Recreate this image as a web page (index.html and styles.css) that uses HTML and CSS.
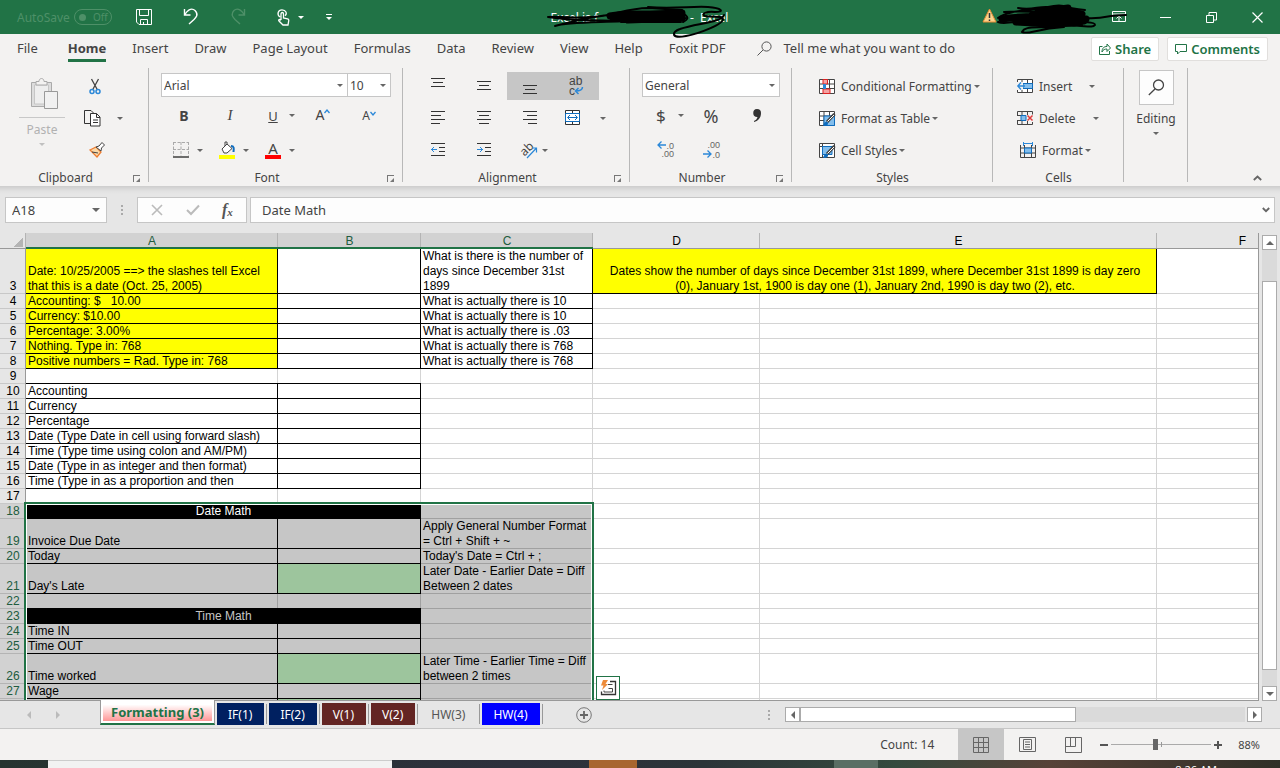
FILE: index.html
```html
<!DOCTYPE html>
<html lang="en">
<head>
    <meta charset="UTF-8">
    <meta name="viewport" content="width=device-width, initial-scale=1">
    <title>Excel</title>
    <link rel="stylesheet" href="styles.css">
</head>
<body>
    <header class="title-bar">
        <div class="quick-access">
            <span class="autosave">AutoSave</span>
            <button class="toggle" aria-label="AutoSave"><i></i>Off</button>
            <button class="qa save" aria-label="Save"><svg width="16" height="16"><path d="M.5.5h15v15H3L.5 13zM3.500 .5v6h9v-6M4.500 15.500v-5h7v5M7.500 13v2" fill="none" stroke="#fff"/></svg></button>
            <button class="qa undo" aria-label="Undo"><svg width="16" height="18"><path d="M1.500 1v6h6M1.500 7C4 3 8-1 12 2.500c4 4 1 7-1 9L6 16" fill="none" stroke="#fff" stroke-width="1.400"/></svg></button>
            <button class="qa redo" aria-label="Redo"><svg width="16" height="18"><path d="M14.500 1v6h-6M14.500 7C12 3 8-1 4 2.500c-4 4-1 7 1 9l5 4.500" fill="none" stroke="#4e9068" stroke-width="1.400"/></svg></button>
            <button class="qa touch" aria-label="Touch mode"><svg width="13" height="17"><path d="M3 8C-.5 5.500 1 .8 5 .8s5.500 4 3 6M4 11V5c0-2 2.500-2 2.500 0v4l4 .8c1 .2 1.500 1 1.200 2L11 16H6L2 12c-1-1.500.5-2 2-.8" fill="none" stroke="#fff" stroke-width="1.300"/></svg><span class="caret"></span></button>
            <button class="qa more" aria-label="Customize"><span class="caret"></span></button>
        </div>
        <div class="doc-name">
            <span>Excel is f</span><span class="app">- &nbsp;Excel</span>
            <svg class="scribble" width="184" height="36"><path d="M2 17c20-1 35 3 60-2 14-3 25-7 40-7l34 2M2 17c30 5 60 3 90 4 20 1 40 2 48-3M9 26c20-5 35-10 66-12M9 26c15-5 60-3 80-6" class="thin"/><path d="M64 16c14-3 25-2 40-2l32-1M66 17c30-3 50-2 70 0M74 18l62-3M82 20l54-2M84 14h52" class="fat"/><path d="M102 7c25 2 45-1 60 0 14 1 17 5 7 5-8-1-15 2-10 4 8 2 17-1 18 3 1 5-25 15-37 17-15 3-15-4-6-7 16-6 41-6 44-14M138 14c6 4 3 6-1 8M75 22h60" class="thin"/></svg>
        </div>
        <div class="window-tools">
            <svg class="warn" width="15" height="15"><path d="M7.500 1l6.500 13H1z" fill="#fbd38b" stroke="#e58a35"/><path d="M7.500 5v5M7.500 11.500v1.500" stroke="#333" stroke-width="1.500"/></svg>
            <svg class="scribble-user" width="134" height="36"><path d="M2 18c10-8 30-7 45-10 20-4 25 1 42 2M2 22c8 3 14-2 24 1s42 3 60 2M8 12c22-2 40 2 60-2M22 8c14 3 20-2 30-1 20-5 24 4 36 6M26 32c3-7 15-3 40-6 20-2 30 3 33-1 0-5-20 0-13-7 14 2 26-3 44-3M26 32c6 3 13-3 42-5" class="thin"/><path d="M6 19c24-4 50-3 84 0M36 15c20-7 40-4 50-1M42 12l30-4M20 22c24 2 50 2 68-1M40 23h38" class="fat"/></svg>
            <button class="win" aria-label="Ribbon display"><svg width="14" height="12"><path d="M.5.5h13v10H.5zM.5 3h13M7 10V5M4.500 7.500L7 5l2.500 2.500" fill="none" stroke="#fff"/></svg></button>
            <button class="win" aria-label="Minimize"><svg width="11" height="11"><path d="M0 5.500h11" stroke="#fff"/></svg></button>
            <button class="win" aria-label="Restore"><svg width="11" height="11"><path d="M.5 3.500h7v7h-7zM3 3V.5h7.500V8H8" fill="none" stroke="#fff"/></svg></button>
            <button class="win" aria-label="Close"><svg width="11" height="11"><path d="M.5.5l10 10M10.500.5l-10 10" stroke="#fff" stroke-width="1.200"/></svg></button>
        </div>
    </header>

    <nav class="menu">
        <button>File</button>
        <button class="on">Home</button>
        <button>Insert</button>
        <button>Draw</button>
        <button>Page Layout</button>
        <button>Formulas</button>
        <button>Data</button>
        <button>Review</button>
        <button>View</button>
        <button>Help</button>
        <button>Foxit PDF</button>
        <button class="tell"><svg width="15" height="15"><circle cx="9.500" cy="5.500" r="4.600" fill="none" stroke="#555"/><path d="M6 9L.5 14.500" stroke="#555"/></svg>Tell me what you want to do</button>
        <div class="share-wrap">
            <button class="share"><svg width="12" height="12"><path d="M3.500 3.500H.5v8h10V8M3 9c0-4 2-5.500 5-5.500V1l3.500 4L8 8.500V6C6 6 4 6.500 3 9z" fill="none" stroke="#217346"/></svg>Share</button>
            <button class="share"><svg width="12" height="11"><path d="M.5.5h11v7H5L2.500 10V7.500h-2z" fill="none" stroke="#217346"/></svg>Comments</button>
        </div>
    </nav>

    <section class="ribbon">
        <div class="group clipboard">
            <div class="group-body">
                <button class="paste">
                    <svg width="29" height="32"><path d="M1.500 4.500h20v24h-20z" fill="#ddd" stroke="#aaa"/><path d="M4.500 7h14v19h-14z" fill="#eee" stroke="#c6c6c6"/><path d="M6 7V3.500h3c0-4 5-4 5 0h3V7z" fill="#f3f2f1" stroke="#aaa"/><path d="M14.500 13.500h13v17h-13z" fill="#f1f1f1" stroke="#999"/></svg>
                    <span class="paste-text">Paste</span>
                    <span class="caret"></span>
                </button>
                <div class="clip-tools">
                    <button aria-label="Cut"><svg width="12" height="17"><path d="M2.500 1l6 11M9.500 1l-6 11" stroke="#444" stroke-width="1.300"/><circle cx="3" cy="13.500" r="2" fill="none" stroke="#2b88d8" stroke-width="1.500"/><circle cx="9" cy="13.500" r="2" fill="none" stroke="#2b88d8" stroke-width="1.500"/></svg></button>
                    <button class="copy" aria-label="Copy"><svg width="17" height="17"><path d="M6 13.500H.5V.5H7l3 3" fill="none" stroke="#333"/><path d="M6.500 3.500h6l3.500 3.500v9H6.500zM12.500 3.500v4H16M9 10h5M9 12.500h5" fill="#fff" stroke="#333"/></svg><span class="caret"></span></button>
                    <button aria-label="Format Painter"><svg width="17" height="16"><path d="M1 8l6-3 5 5-4 5z" fill="#fbd9a8" stroke="#ed7d31" stroke-width="1.300"/><path d="M3 10l6 1M7 5l3-1 3-3.500 2.500 2.500-3 3-.5 3z" fill="#fff" stroke="#444"/></svg></button>
                </div>
            </div>
            <div class="group-label">Clipboard<i class="launch"></i></div>
        </div>

        <div class="group font">
            <div class="group-body tools">
                <div class="combos">
                    <label class="combo name"><select aria-label="Font"><option>Arial</option></select><span class="caret"></span></label>
                    <label class="combo size"><select aria-label="Font size"><option>10</option></select><span class="caret"></span></label>
                </div>
                <button class="raised bold">B</button>
                <button class="raised italic">I</button>
                <button class="raised split"><u>U</u><span class="caret"></span></button>
                <button class="grow">A<svg width="6" height="5"><path d="M.5 4L3 1l2.500 3" fill="none" stroke="#2b88d8" stroke-width="1.300"/></svg></button>
                <button class="grow small">A<svg width="6" height="5"><path d="M.5 1L3 4l2.500-3" fill="none" stroke="#2b88d8" stroke-width="1.300"/></svg></button>
                <button class="split" aria-label="Borders"><svg width="16" height="16"><path d="M.5 0v14M8 0v14M15.500 0v14M0 .5h16M0 7.500h16" stroke="#aaa" stroke-dasharray="3 1.500"/><path d="M0 15h16" stroke="#222" stroke-width="1.300"/></svg><span class="caret"></span></button>
                <button class="split" aria-label="Fill Color"><svg width="16" height="18"><path d="M3 8l5-5 5 4.500-5 4.500H5zM8 4V1H6v4" fill="#fff" stroke="#444"/><path d="M12 5c3 0 3 2 2.500 6" fill="none" stroke="#0f6cbd" stroke-width="2"/><path d="M0 14h16v4H0z" fill="#ff0"/></svg><span class="caret"></span></button>
                <button class="split color" aria-label="Font Color"><span>A</span><span class="caret"></span></button>
            </div>
            <div class="group-label">Font<i class="launch"></i></div>
        </div>

        <div class="group align">
            <div class="group-body tools">
                <button aria-label="Top Align"><svg width="14" height="20"><path d="M0 2.500h14M2 6.500h10M0 10.500h14" stroke="#333"/></svg></button>
                <button aria-label="Middle Align"><svg width="14" height="20"><path d="M0 5.500h14M2 9.500h10M0 13.500h14" stroke="#333"/></svg></button>
                <button class="down" aria-label="Bottom Align"><svg width="14" height="20"><path d="M0 9.500h14M2 13.500h10M0 17.500h14" stroke="#333"/></svg></button>
                <button class="down wrap"><span>ab<br>c<svg width="8" height="8"><path d="M7.500 0c0 3-2 4-7 4M3.500 1l-3 3 3 3" fill="none" stroke="#2b88d8" stroke-width="1.500"/></svg></span></button>
                <button aria-label="Align Left"><svg width="14" height="14"><path d="M0 .5h14M0 4.500h10M0 8.500h14M0 12.500h9" stroke="#333"/></svg></button>
                <button aria-label="Center"><svg width="14" height="14"><path d="M0 .5h14M2 4.500h10M0 8.500h14M2 12.500h10" stroke="#333"/></svg></button>
                <button aria-label="Align Right"><svg width="14" height="14"><path d="M0 .5h14M4 4.500h10M0 8.500h14M5 12.500h9" stroke="#333"/></svg></button>
                <button class="split merge" aria-label="Merge"><svg width="16" height="16"><path d="M.5.5h14v14H.5zM7.500 0v4M7.500 11v4" fill="#fff" stroke="#333"/><path d="M.5 3.500h14v8H.5zM3 7.500h9M5 5L2.500 7.500 5 10M10 5l2.500 2.500L10 10" fill="none" stroke="#0f6cbd"/></svg><span class="caret"></span></button>
                <button aria-label="Decrease Indent"><svg width="14" height="14"><path d="M0 .5h14M8 4.500h6M8 8.500h6M0 12.500h14" stroke="#333"/><path d="M0 6.500h6M3 4L.5 6.500 3 9" fill="none" stroke="#2b88d8"/></svg></button>
                <button aria-label="Increase Indent"><svg width="14" height="14"><path d="M0 .5h14M8 4.500h6M8 8.500h6M0 12.500h14" stroke="#333"/><path d="M0 6.500h6M3 4l2.500 2.500L3 9" fill="none" stroke="#2b88d8"/></svg></button>
                <button class="split orient" aria-label="Orientation"><svg width="17" height="17"><text x="0" y="12" transform="rotate(-45 5 9)" font-size="12" fill="#444">ab</text><path d="M6 16L15.500 6M11 6h4.500v4.500" fill="none" stroke="#2b88d8" stroke-width="1.200"/></svg><span class="caret"></span></button>
            </div>
            <div class="group-label">Alignment<i class="launch"></i></div>
        </div>

        <div class="group number">
            <div class="group-body tools">
                <label class="combo format"><select aria-label="Number format"><option>General</option></select><span class="caret"></span></label>
                <button class="raised split money">$<span class="caret"></span></button>
                <button class="raised percent">%</button>
                <button class="raised comma" aria-label="Comma Style"><svg width="8" height="13"><path d="M4 0a4 4 0 014 4c0 5-3 8-7 9v-1c2-1 3-2 3.500-4A4 4 0 114 0z" fill="#333"/></svg></button>
                <button class="decimal"><span><svg width="9" height="8"><path d="M9 4H1M4.500.5L1 4l3.500 3.500" fill="none" stroke="#2b88d8" stroke-width="1.300"/></svg>.0</span><span>.00</span></button>
                <button class="decimal"><span>.00</span><span><svg width="9" height="8"><path d="M0 4h8M4.500.5L8 4 4.500 7.500" fill="none" stroke="#2b88d8" stroke-width="1.300"/></svg>.0</span></button>
            </div>
            <div class="group-label">Number<i class="launch"></i></div>
        </div>

        <div class="group styles">
            <div class="group-body list">
                <button><svg width="16" height="15"><path d="M.5.5h15v14H.5zM0 5h16M0 9.500h16M5 0v15M10.500 0v15" fill="#fff" stroke="#444"/><path d="M4 .5h4.500V5H4zM4 10h7v4.500H4z" fill="#f4a3a3" stroke="#d22"/><path d="M4 5h3v5H4z" fill="#2b88d8"/></svg>Conditional Formatting<span class="caret"></span></button>
                <button><svg width="16" height="15"><path d="M.5.5h15v14H.5zM0 5h16M0 9.500h16M5 0v15M10.500 0v15" fill="#fff" stroke="#444"/><path d="M5 5h10.500v9.500H5z" fill="#83beec" stroke="#0f6cbd"/><path d="M15.500 3L8 11" stroke="#444" stroke-width="3"/><path d="M15 4L8.500 10.500" stroke="#fff"/><path d="M4 14.500c2-5 5-4 5-2s-3 3-5 2z" fill="#0f6cbd"/></svg>Format as Table<span class="caret"></span></button>
                <button><svg width="16" height="15"><path d="M.5.5h15v14H.5zM0 3.500h16M3.500 0v15" fill="#fff" stroke="#444"/><path d="M3.500 3.500h9.500v8H3.500z" fill="#83beec" stroke="#0f6cbd"/><path d="M15.500 3L8 11" stroke="#444" stroke-width="3"/><path d="M15 4L8.500 10.500" stroke="#fff"/><path d="M4 14.500c2-5 5-4 5-2s-3 3-5 2z" fill="#0f6cbd"/></svg>Cell Styles<span class="caret"></span></button>
            </div>
            <div class="group-label">Styles</div>
        </div>

        <div class="group cells">
            <div class="group-body list">
                <button class="wide"><svg width="16" height="15"><path d="M.5.5h15v13H.5zM0 4.500h16M0 9.500h16M5 0v14M10.500 0v14" fill="#fff" stroke="#444"/><path d="M6 4.500h9.500v5H6z" fill="#83beec" stroke="#0f6cbd"/><path d="M0 3h6v8H0z" fill="#f3f2f1"/><path d="M8 7H1M4 3.500L.8 7 4 10.500" fill="none" stroke="#2b88d8" stroke-width="1.300"/></svg>Insert<span class="caret"></span></button>
                <button class="wide"><svg width="16" height="15"><path d="M.5 4V.5h15v3M.5 9.500v4h15V11M5 0v4M10.500 0v4M5 10v4M10.500 10v4M0 4.500h5M0 9.500h5" fill="none" stroke="#444"/><path d="M4 4.500h5v5H4z" fill="#83beec" stroke="#0f6cbd"/><path d="M10.500 4.500l5 5M15.500 4.500l-5 5" stroke="#e03c3c" stroke-width="1.500"/></svg>Delete<span class="caret"></span></button>
                <button class="shift"><svg width="16" height="16"><path d="M.5 3v12.500h15V3M0 6h16M0 11h16M4.500 3v13M11.500 3v13" fill="none" stroke="#444"/><path d="M4.500 6h7v5h-7z" fill="#83beec" stroke="#0f6cbd"/><path d="M3.500 0v4M12.500 0v4M4 1.500h8" stroke="#2b88d8"/></svg>Format<span class="caret"></span></button>
            </div>
            <div class="group-label">Cells</div>
        </div>

        <div class="group editing">
            <button class="edit"><span class="edit-icon"><svg width="17" height="17"><circle cx="10.500" cy="6" r="5" fill="none" stroke="#444" stroke-width="1.300"/><path d="M7 10L.8 16" stroke="#444" stroke-width="1.300"/></svg></span>Editing<span class="caret"></span></button>
        </div>
        <button class="collapse" aria-label="Collapse ribbon"><svg width="9" height="6"><path d="M.8 5l3.700-3.500L8.200 5" fill="none" stroke="#666" stroke-width="1.800"/></svg></button>
    </section>

    <section class="formula-bar">
        <label class="name-box"><input type="text" value="A18" aria-label="Name box"><span class="caret"></span></label>
        <span class="dots"></span>
        <div class="fx">
            <button aria-label="Cancel"><svg width="12" height="10"><path d="M1 0l10 10M11 0L1 10" stroke="#bbb" stroke-width="1.600"/></svg></button>
            <button aria-label="Enter"><svg width="14" height="10"><path d="M1 5l4 4 8-8.500" fill="none" stroke="#bbb" stroke-width="2"/></svg></button>
            <button class="fn">f<sub>x</sub></button>
        </div>
        <div class="formula"><input type="text" value="Date Math" aria-label="Formula"><svg width="8" height="6"><path d="M.8 1L4 4.200 7.200 1" fill="none" stroke="#666" stroke-width="1.800"/></svg></div>
    </section>

    <main class="workspace">
        <div class="sheet">
            <table>
                <colgroup><col class="c-head"><col class="c-a"><col class="c-b"><col class="c-c"><col class="c-d"><col class="c-e"><col class="c-f"></colgroup>
                <thead>
                    <tr><th class="corner"></th><th class="sel">A</th><th class="sel">B</th><th class="sel">C</th><th>D</th><th>E</th><th>F</th></tr>
                </thead>
                <tbody>
                    <tr class="h3"><th>3</th><td class="box yellow">Date: 10/25/2005 ==&gt; the slashes tell Excel<br>that this is a date (Oct. 25, 2005)</td><td class="box"></td><td class="box">What is there is the number of<br>days since December 31st<br>1899</td><td class="box yellow center" colspan="2">Dates show the number of days since December 31st 1899, where December 31st 1899 is day zero<br>(0), January 1st, 1900 is day one (1), January 2nd, 1990 is day two (2), etc.</td><td></td></tr>
                    <tr><th>4</th><td class="box yellow">Accounting: $ &nbsp; 10.00</td><td class="box"></td><td class="box">What is actually there is 10</td><td></td><td></td><td></td></tr>
                    <tr><th>5</th><td class="box yellow">Currency: $10.00</td><td class="box"></td><td class="box">What is actually there is 10</td><td></td><td></td><td></td></tr>
                    <tr><th>6</th><td class="box yellow">Percentage: 3.00%</td><td class="box"></td><td class="box">What is actually there is .03</td><td></td><td></td><td></td></tr>
                    <tr><th>7</th><td class="box yellow">Nothing. Type in: 768</td><td class="box"></td><td class="box">What is actually there is 768</td><td></td><td></td><td></td></tr>
                    <tr><th>8</th><td class="box yellow">Positive numbers = Rad. Type in: 768</td><td class="box"></td><td class="box">What is actually there is 768</td><td></td><td></td><td></td></tr>
                    <tr><th>9</th><td class="under"></td><td class="under"></td><td></td><td></td><td></td><td></td></tr>
                    <tr><th>10</th><td class="box">Accounting</td><td class="box"></td><td></td><td></td><td></td><td></td></tr>
                    <tr><th>11</th><td class="box">Currency</td><td class="box"></td><td></td><td></td><td></td><td></td></tr>
                    <tr><th>12</th><td class="box">Percentage</td><td class="box"></td><td></td><td></td><td></td><td></td></tr>
                    <tr><th>13</th><td class="box">Date (Type Date in cell using forward slash)</td><td class="box"></td><td></td><td></td><td></td><td></td></tr>
                    <tr><th>14</th><td class="box">Time (Type time using colon and AM/PM)</td><td class="box"></td><td></td><td></td><td></td><td></td></tr>
                    <tr><th>15</th><td class="box">Date (Type in as integer and then format)</td><td class="box"></td><td></td><td></td><td></td><td></td></tr>
                    <tr><th>16</th><td class="box">Time (Type in as a proportion and then</td><td class="box"></td><td></td><td></td><td></td><td></td></tr>
                    <tr><th>17</th><td></td><td></td><td></td><td></td><td></td><td></td></tr>
                    <tr><th class="sel">18</th><td class="dark" colspan="2">Date Math</td><td class="picked"></td><td></td><td></td><td></td></tr>
                    <tr class="h2"><th class="sel">19</th><td class="picked box">Invoice Due Date</td><td class="picked box"></td><td class="picked">Apply General Number Format<br>= Ctrl + Shift + ~</td><td></td><td></td><td></td></tr>
                    <tr><th class="sel">20</th><td class="picked box">Today</td><td class="picked box"></td><td class="picked">Today's Date = Ctrl + ;</td><td></td><td></td><td></td></tr>
                    <tr class="h2"><th class="sel">21</th><td class="picked box">Day's Late</td><td class="green box"></td><td class="picked">Later Date - Earlier Date = Diff<br>Between 2 dates</td><td></td><td></td><td></td></tr>
                    <tr><th class="sel">22</th><td class="picked under"></td><td class="picked under"></td><td class="picked"></td><td></td><td></td><td></td></tr>
                    <tr><th class="sel">23</th><td class="dark dim" colspan="2">Time Math</td><td class="picked"></td><td></td><td></td><td></td></tr>
                    <tr><th class="sel">24</th><td class="picked box">Time IN</td><td class="picked box"></td><td class="picked"></td><td></td><td></td><td></td></tr>
                    <tr><th class="sel">25</th><td class="picked box">Time OUT</td><td class="picked box"></td><td class="picked"></td><td></td><td></td><td></td></tr>
                    <tr class="h2"><th class="sel">26</th><td class="picked box">Time worked</td><td class="green box"></td><td class="picked">Later Time - Earlier Time = Diff<br>between 2 times</td><td></td><td></td><td></td></tr>
                    <tr><th class="sel">27</th><td class="picked box">Wage</td><td class="picked box"></td><td class="picked"></td><td></td><td></td><td></td></tr>
                    <tr><th class="sel"></th><td class="picked box"></td><td class="green box"></td><td class="picked"></td><td></td><td></td><td></td></tr>
                </tbody>
            </table>
            <div class="selection"></div>
            <button class="quick-analysis" aria-label="Quick Analysis"><svg width="18" height="18"><path d="M11 2.500h5.500v13H2.500v-3" fill="none" stroke="#333" stroke-width="1.300"/><path d="M5 11.500v1.500h8.500V9.500h-4" fill="none" stroke="#444"/><path d="M9 5.500h4.500" stroke="#444"/><path d="M4 1h5L6.500 5H9l-6 6 1.500-4.500H2z" fill="#ed8b3a"/></svg></button>
        </div>
        <div class="v-scroll">
            <button aria-label="Scroll up"><span class="tri up"></span></button>
            <div class="track"><div class="thumb"></div></div>
            <button aria-label="Scroll down"><span class="tri down-tri"></span></button>
        </div>
    </main>

    <footer class="sheet-bar">
        <div class="sheet-nav"><span class="tri left"></span><span class="tri right"></span></div>
        <div class="sheet-tabs">
            <button class="active">Formatting (3)</button>
            <button class="navy">IF(1)</button>
            <button class="navy">IF(2)</button>
            <button class="maroon">V(1)</button>
            <button class="maroon">V(2)</button>
            <button class="plain">HW(3)</button>
            <button class="blue">HW(4)</button>
        </div>
        <button class="add" aria-label="New sheet"><svg width="16" height="16"><circle cx="8" cy="8" r="7.300" fill="none" stroke="#777"/><path d="M8 4v8M4 8h8" stroke="#666" stroke-width="1.800"/></svg></button>
        <span class="dots"></span>
        <div class="h-scroll">
            <button aria-label="Scroll left"><span class="tri left"></span></button>
            <div class="track"><div class="thumb"></div></div>
            <button aria-label="Scroll right"><span class="tri right"></span></button>
        </div>
    </footer>

    <div class="status">
        <span class="count">Count: 14</span>
        <button class="view on" aria-label="Normal"><svg width="16" height="16"><path d="M.5.5h15v15H.5zM0 5.500h16M0 10.500h16M5.500 0v16M10.500 0v16" fill="none" stroke="#666"/></svg></button>
        <button class="view" aria-label="Page Layout"><svg width="17" height="15"><path d="M.5.5h16v14H.5zM4.500 2.500h8v10h-8zM6 5h5M6 7.500h5M6 10h5" fill="none" stroke="#666"/></svg></button>
        <button class="view" aria-label="Page Break"><svg width="17" height="16"><path d="M.5.5h16v15H.5zM.5 9.500h10V.5M5.500.5v9" fill="none" stroke="#666"/></svg></button>
        <div class="zoom">
            <button aria-label="Zoom out"><i class="minus"></i></button>
            <input type="range" min="0" max="100" value="44" aria-label="Zoom">
            <button aria-label="Zoom in"><i class="plus"></i></button>
            <span class="percent-text">88%</span>
        </div>
    </div>

    <div class="taskbar">
        <span class="search"></span><span class="task"></span><span class="task tray"></span><span class="clock">8:26 AM</span>
    </div>
</body>
</html>
```
FILE: styles.css
```css
*{
    margin: 0;
    padding: 0;
    box-sizing: border-box;
}
body{
    display: flex;
    flex-direction: column;
    height: 100vh;
    overflow: hidden;
    background: #e6e6e6;
    color: #444;
    font: 12px "Noto Sans", "Open Sans", sans-serif;
}
button{
    border: none;
    background: none;
    color: inherit;
    font: inherit;
    white-space: nowrap;
}
input, select{
    border: none;
    outline: none;
    background: none;
    color: inherit;
    font: inherit;
}
svg{
    display: block;
    flex: none;
    overflow: visible;
}
.caret{
    flex: none;
    width: 0;
    height: 0;
    border: 3px solid transparent;
    border-top-color: #666;
    border-bottom: none;
}

/* title bar */
.title-bar{
    display: flex;
    flex: none;
    height: 34px;
    align-items: center;
    background: #217346;
    color: #fff;
}
.quick-access{
    display: flex;
    flex: none;
    width: 43%;
    align-items: center;
    padding-left: 17px;
}
.autosave{
    width: 57px;
    color: #4e9068;
}
.toggle{
    display: flex;
    width: 38px;
    height: 16px;
    align-items: center;
    gap: 7px;
    padding-left: 4px;
    border: 1px solid #4e9068;
    border-radius: 8px;
    color: #4e9068;
    font-size: 10px;
}
.toggle i{
    width: 7px;
    height: 7px;
    border-radius: 50%;
    background: #4e9068;
}
.qa{
    display: flex;
    align-items: center;
}
.qa .caret{
    border-top-color: #fff;
}
.save{
    margin-left: 24px;
}
.undo, .redo{
    margin-left: 31px;
}
.touch{
    gap: 8px;
    margin-left: 31px;
}
.more{
    margin-left: 22px;
    padding-top: 2px;
    border-top: 1px solid #fff;
}
.doc-name{
    position: relative;
    display: flex;
    flex: none;
    width: 178px;
    justify-content: space-between;
}
.scribble, .scribble-user{
    position: absolute;
    z-index: 2;
    fill: none;
    stroke: #000;
    stroke-linecap: round;
}
.scribble{
    top: -9px;
    left: -4px;
}
.scribble-user{
    top: 0;
    right: 150px;
}
.thin{
    stroke-width: 2;
}
.fat{
    stroke-width: 7;
}
.window-tools{
    position: relative;
    display: flex;
    flex: 1;
    justify-content: flex-end;
    align-items: center;
}
.warn{
    margin: 0 99px 4px 0;
}
.win{
    display: flex;
    width: 46px;
    height: 34px;
    align-items: center;
    justify-content: center;
}

/* menu */
.menu{
    display: flex;
    flex: none;
    height: 34px;
    align-items: flex-start;
    background: #f3f2f1;
    font-size: 13px;
}
.menu > button{
    height: 28px;
    margin-left: 26px;
    padding-top: 3px;
    border-bottom: 3px solid transparent;
}
.menu > button:first-child{
    margin: 0 4px 0 17px;
}
.menu > .on{
    border-color: #217346;
    font-weight: bold;
}
.menu > .tell{
    display: flex;
    align-items: center;
    gap: 11px;
    margin-left: 32px;
}
.share-wrap{
    display: flex;
    gap: 8px;
    margin: 3px 12px 0 auto;
}
.share{
    display: flex;
    height: 24px;
    align-items: center;
    gap: 4px;
    padding: 0 7px;
    border: 1px solid #e1dfdd;
    border-radius: 2px;
    background: #fff;
    color: #217346;
    font-weight: 600;
}

/* ribbon */
.ribbon{
    display: flex;
    flex: none;
    height: 118px;
    background: #f3f2f1;
}
.group{
    position: relative;
    display: flex;
    flex: none;
    flex-direction: column;
}
.group::after{
    content: "";
    position: absolute;
    top: 0;
    right: 0;
    bottom: 4px;
    width: 1px;
    background: #b8b8b8;
}
.group-body{
    flex: 1;
    padding-top: 2px;
}
.group-label{
    height: 17px;
    line-height: 17px;
    text-align: center;
}
.clipboard .group-label, .font .group-label, .align .group-label, .number .group-label{
    padding-right: 18px;
}
.launch{
    position: absolute;
    right: 9px;
    bottom: 4px;
    width: 7px;
    height: 7px;
    border-top: 1px solid #777;
    border-left: 1px solid #777;
}
.launch::after{
    content: "";
    position: absolute;
    right: 0;
    bottom: 0;
    border: 2px solid #777;
    border-top-color: transparent;
    border-left-color: transparent;
}
.clipboard{
    width: 149px;
}
.clipboard .group-body{
    display: flex;
}
.paste{
    display: flex;
    width: 46px;
    flex-direction: column;
    align-items: center;
    margin: 8px 0 0 19px;
    color: #b1b1b1;
}
.paste svg{
    margin-left: 4px;
}
.paste-text{
    width: 46px;
    margin: 7px 0 5px;
    padding-top: 3px;
    border-top: 1px solid #c8c8c8;
}
.paste .caret{
    border-top-color: #c0c0c0;
}
.clip-tools{
    display: grid;
    grid-template-rows: 32px 32px 32px;
    margin-left: 19px;
}
.clip-tools button{
    display: flex;
    align-items: center;
    padding-left: 5px;
}
.clip-tools .copy{
    gap: 16px;
    padding-left: 0;
}
.tools{
    display: grid;
    grid-template-rows: 32px 32px 32px;
    justify-content: start;
    padding-left: 12px;
}
.tools button{
    display: flex;
    align-items: center;
    justify-content: center;
}
.tools .raised{
    padding-bottom: 5px;
}
.tools .split{
    justify-content: flex-start;
    gap: 9px;
    padding-left: 12px;
}
.font{
    width: 254px;
}
.font .tools{
    grid-template-columns: repeat(5, 46px);
}
.combos{
    display: flex;
    grid-column: 1 / 6;
}
.combo{
    position: relative;
    height: 24px;
    margin-top: 3px;
    border: 1px solid #c6c6c6;
    background: #fff;
}
.combo select{
    width: 100%;
    height: 22px;
    padding-left: 2px;
    appearance: none;
}
.combo .caret{
    position: absolute;
    top: 10px;
    right: 4px;
}
.name{
    width: 187px;
}
.size{
    width: 43px;
    border-left: none;
}
.tools .bold{
    font-size: 14px;
    font-weight: bold;
}
.tools .italic{
    font: italic 15px "Liberation Serif", serif;
}
.font u{
    width: 16px;
    font-size: 13px;
    text-align: center;
}
.font .split{
    gap: 8px;
}
.tools .grow{
    align-items: flex-start;
    padding: 3px 0 0 2px;
    font-size: 14px;
}
.tools .grow svg{
    margin-top: 4px;
}
.tools .small{
    padding-top: 5px;
    font-size: 12px;
}
.color span:first-child{
    width: 16px;
    height: 18px;
    border-bottom: 4px solid #f00;
    font-size: 15px;
    line-height: 14px;
}
.align{
    width: 227px;
}
.align .tools{
    grid-template-columns: repeat(4, 46px);
}
.tools .down{
    height: 28px;
    margin-top: 2px;
    background: #c6c6c6;
}
.wrap span{
    text-align: left;
    font: 12px/10px "Liberation Sans", Arial, sans-serif;
}
.wrap svg, .decimal svg{
    display: inline-block;
}
.tools .merge{
    gap: 19px;
    padding-left: 12px;
}
.tools .orient{
    gap: 4px;
    padding-left: 14px;
}
.number{
    width: 162px;
}
.number .tools{
    grid-template-columns: repeat(3, 46px);
}
.format{
    grid-column: 1 / 4;
}
.tools .money{
    gap: 12px;
    padding-left: 14px;
    font-size: 17px;
}
.tools .percent{
    font-size: 18px;
}
.tools .decimal{
    flex-direction: column;
    align-items: flex-end;
    padding-right: 14px;
    color: #666;
    font: 9px/9px "Liberation Sans", Arial, sans-serif;
}
.decimal span{
    height: 9px;
}
.list{
    display: flex;
    flex-direction: column;
    align-items: flex-start;
}
.list button{
    display: flex;
    height: 32px;
    align-items: center;
}
.list svg{
    margin-right: 6px;
}
.list .caret{
    margin-left: 2px;
}
.styles{
    width: 201px;
}
.styles .list{
    padding-left: 27px;
}
.cells{
    width: 131px;
}
.cells .list{
    padding-left: 24px;
}
.cells .wide .caret{
    margin-left: 17px;
}
.cells .shift{
    padding-left: 3px;
}
.editing{
    width: 64px;
    align-items: center;
}
.edit{
    display: flex;
    flex-direction: column;
    align-items: center;
    gap: 5px;
    padding-top: 2px;
}
.edit-icon{
    display: grid;
    width: 35px;
    height: 35px;
    place-items: center;
    border: 1px solid #c6c6c6;
    background: #fdfdfd;
}
.collapse{
    align-self: flex-end;
    margin: 0 18px 5px auto;
}

/* formula bar */
.formula-bar{
    display: flex;
    flex: none;
    height: 47px;
    padding: 11px 5px 10px;
    background: linear-gradient(#cdcdcd, #e1e1e1 5px, #e6e6e6 8px);
    font-size: 13px;
}
.name-box, .fx, .formula{
    display: flex;
    align-items: center;
    border: 1px solid #c6c6c6;
    background: #fdfdfd;
}
.name-box{
    width: 102px;
    padding: 0 6px;
}
.name-box input{
    width: 100%;
}
.name-box .caret{
    border-width: 4px 4px 0;
}
.dots{
    align-self: center;
    width: 2px;
    height: 10px;
    background: repeating-linear-gradient(#aaa 0 2px, transparent 2px 4px);
}
.formula-bar .dots{
    margin: 0 14px;
}
.fx{
    width: 110px;
    justify-content: space-around;
    padding: 0 2px;
}
.fx .fn{
    color: #555;
    font: italic bold 16px "Liberation Serif", serif;
}
.fn sub{
    font-size: 11px;
    vertical-align: -1px;
}
.formula{
    flex: 1;
    margin-left: 3px;
    padding: 0 4px 0 11px;
}
.formula input{
    flex: 1;
}

/* sheet */
.workspace{
    display: flex;
    flex: 1;
    min-height: 0;
}
.sheet{
    position: relative;
    flex: 1;
    overflow: hidden;
    border-right: 1px solid #999;
    border-bottom: 1px solid #999;
    background: #fff;
}
.sheet table{
    width: 1328px;
    table-layout: fixed;
    border-spacing: 0;
    color: #000;
    font: 12px/15px "Liberation Sans", Arial, sans-serif;
}
.c-head{ width: 26px; }
.c-a{ width: 252px; }
.c-b{ width: 143px; }
.c-c{ width: 172px; }
.c-d{ width: 167px; }
.c-e{ width: 397px; }
.c-f{ width: 171px; }
.sheet th{
    background: #e6e6e6;
    box-shadow: inset -1px 0 #999, inset 0 -1px #c8c8c8;
    font-weight: normal;
    text-align: center;
    vertical-align: bottom;
}
.sheet tbody .sel{
    background: #d2d2d2;
    color: #215c3e;
    box-shadow: inset -1px 0 #999, inset 0 -1px #b4b4b4;
}
.sheet thead th{
    height: 16px;
    box-shadow: inset 0 -1px #999, inset -1px 0 #b4b4b4;
}
.sheet thead .sel{
    background: #d2d2d2;
    color: #215c3e;
    box-shadow: inset 0 -2px #217346, inset -1px 0 #b4b4b4;
}
.sheet thead .corner{
    background: linear-gradient(135deg, #e6e6e6 50%, #b4b4b4 50%) 14px 5px / 9px 9px no-repeat #e6e6e6;
}
.sheet td{
    --right: #d4d4d4;
    --bottom: #d4d4d4;
    height: 15px;
    padding: 0 2px;
    overflow: hidden;
    box-shadow: inset 0 -1px var(--bottom), inset -1px 0 var(--right);
    vertical-align: bottom;
    white-space: nowrap;
}
.sheet .h2 td{
    height: 30px;
}
.sheet .h3 td{
    height: 45px;
}
.sheet .picked{
    --right: #a0a0a0;
    --bottom: #a0a0a0;
    background: #c6c6c6;
}
.sheet .box{
    --right: #000;
    --bottom: #000;
}
.sheet .under{
    --bottom: #000;
}
.yellow{
    background: #ff0;
}
.green{
    background: #9dc59d;
}
.center{
    text-align: center;
}
.sheet .dark{
    --right: #000;
    --bottom: #000;
    background: #000;
    color: #fff;
    text-align: center;
}
.sheet .dim{
    color: #c6c6c6;
}
.selection{
    position: absolute;
    top: 269px;
    left: 24px;
    width: 570px;
    height: 400px;
    border: 2px solid #217346;
    box-shadow: inset 0 0 0 1px #fff;
}
.quick-analysis{
    position: absolute;
    bottom: 0;
    left: 596px;
    display: grid;
    width: 24px;
    height: 24px;
    place-items: center;
    border: 1px solid #217346;
    background: #fff;
}

/* scroll bars */
.v-scroll{
    display: flex;
    flex: none;
    width: 15px;
    flex-direction: column;
    margin: 2px 3px 0;
}
.v-scroll button, .h-scroll button{
    display: grid;
    flex: none;
    width: 15px;
    height: 15px;
    place-items: center;
    border: 1px solid #ababab;
    background: #fff;
}
.track{
    display: flex;
    flex: 1;
    background: #dadada;
}
.v-scroll .track{
    flex-direction: column;
    padding: 31px 0 16px;
}
.thumb{
    flex: 1;
    border: 1px solid #ababab;
    background: #fff;
}
.tri{
    border: 4px solid transparent;
}
.up{
    border-top: none;
    border-bottom-color: #666;
}
.down-tri{
    border-top-color: #666;
    border-bottom: none;
}
.left{
    border-left: none;
    border-right-color: #666;
}
.right{
    border-right: none;
    border-left-color: #666;
}
.h-scroll{
    display: flex;
    width: 477px;
    height: 15px;
    margin: 6px 18px 0 15px;
}
.h-scroll .track{
    margin-right: 2px;
}
.h-scroll .thumb{
    flex: none;
    width: 62%;
}

/* sheet tabs */
.sheet-bar{
    display: flex;
    flex: none;
    height: 28px;
    border-bottom: 1px solid #c6c6c6;
}
.sheet-nav{
    display: flex;
    width: 100px;
    align-items: center;
    gap: 25px;
    padding-left: 27px;
}
.sheet-nav .left{
    border-right-color: #bbb;
}
.sheet-nav .right{
    border-left-color: #bbb;
}
.sheet-tabs{
    display: flex;
    align-items: flex-start;
}
.sheet-tabs button{
    position: relative;
    height: 22px;
    margin: 2px 5px 0 0;
    padding: 0 12px 0 11px;
    color: #fff;
}
.sheet-tabs button::after{
    content: "";
    position: absolute;
    top: 1px;
    right: -3px;
    bottom: 1px;
    width: 1px;
    background: #999;
}
.sheet-tabs .active{
    z-index: 1;
    height: 25px;
    margin: -1px 2px 0 0;
    padding: 0 10px;
    border: 1px solid #999;
    border-top: none;
    border-bottom: 2px solid #217346;
    background: linear-gradient(#fff 20%, #ff8a8a);
    box-shadow: inset 0 0 0 2px #fff;
    color: #217346;
    font-size: 13px;
    font-weight: bold;
}
.sheet-tabs .active::after{
    display: none;
}
.navy{
    background: #002060;
}
.maroon{
    background: #632523;
}
.blue{
    background: #00f;
}
.sheet-tabs .plain{
    color: #555;
}
.add{
    margin-left: 31px;
}
.sheet-bar > .dots{
    margin-left: auto;
}

/* status bar */
.status{
    display: flex;
    flex: none;
    height: 31px;
    align-items: center;
    justify-content: flex-end;
    background: #f3f2f1;
}
.count{
    margin-right: 24px;
}
.view{
    display: grid;
    width: 46px;
    height: 31px;
    place-items: center;
}
.view.on{
    background: #c6c6c6;
}
.zoom{
    display: flex;
    align-items: center;
    gap: 3px;
    padding: 0 20px 0 4px;
}
.zoom button{
    width: 8px;
    height: 8px;
}
.zoom i{
    display: block;
    width: 8px;
    height: 8px;
    background: linear-gradient(#555, #555) center / 8px 2px no-repeat;
}
.zoom .plus{
    background: linear-gradient(#555, #555) center / 8px 2px no-repeat, linear-gradient(#555, #555) center / 2px 8px no-repeat;
}
.zoom input{
    width: 100px;
    height: 11px;
    appearance: none;
    background: linear-gradient(#999, #999) 50px center / 1px 5px no-repeat, linear-gradient(#aaa, #aaa) center / 100% 1px no-repeat;
}
.zoom input::-webkit-slider-thumb{
    width: 5px;
    height: 11px;
    appearance: none;
    background: #666;
}
.percent-text{
    margin-left: 13px;
    font-size: 11px;
}

/* taskbar */
.taskbar{
    display: flex;
    flex: none;
    height: 8px;
    overflow: hidden;
    background: linear-gradient(90deg, #263430, #2d303c 40%, #2c3438 55%, #344a3e 70%, #574238 82%, #303028);
}
.search{
    width: 344px;
    margin-left: 48px;
    border-top: 1px solid #ccc;
    background: #f2f2f2;
}
.task{
    width: 48px;
    margin-left: 197px;
    background: #a8662f;
}
.tray{
    width: 44px;
    background: #5a6e64;
}
.clock{
    margin: 2px 63px 0 auto;
    color: #fff;
    font-size: 11px;
}
```
